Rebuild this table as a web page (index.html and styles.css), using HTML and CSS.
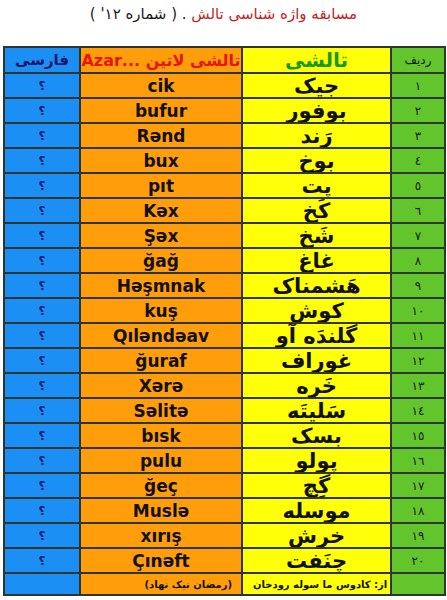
FILE: index.html
```html
<!DOCTYPE html>
<html lang="fa">
<head>
<meta charset="utf-8">
<link rel="stylesheet" href="styles.css">
</head>
<body>
<div class="page">
  <h1 class="title" dir="rtl"><span class="title-red">مسابقه واژه شناسی تالش</span> . ( شماره ۱۲' )</h1>
  <table class="quiz">
    <colgroup>
      <col class="c-fa"><col class="c-lat"><col class="c-tal"><col class="c-num">
    </colgroup>
    <thead>
      <tr>
        <th class="fa h-fa">فارسی</th>
        <th class="lat h-lat" dir="rtl">تالشی لاتین ...Azar</th>
        <th class="tal h-tal">تالشی</th>
        <th class="num h-num">ردیف</th>
      </tr>
    </thead>
    <tbody>
      <tr><td class="fa">؟</td><td class="lat">cik</td><td class="tal">جیک</td><td class="num">١</td></tr>
      <tr><td class="fa">؟</td><td class="lat">bufur</td><td class="tal">بوفور</td><td class="num">٢</td></tr>
      <tr><td class="fa">؟</td><td class="lat">Rənd</td><td class="tal">رَند</td><td class="num">٣</td></tr>
      <tr><td class="fa">؟</td><td class="lat">bux</td><td class="tal">بوخ</td><td class="num">٤</td></tr>
      <tr><td class="fa">؟</td><td class="lat">pıt</td><td class="tal">پِت</td><td class="num">٥</td></tr>
      <tr><td class="fa">؟</td><td class="lat">Kəx</td><td class="tal">کَخ</td><td class="num">٦</td></tr>
      <tr><td class="fa">؟</td><td class="lat">Şəx</td><td class="tal">شَخ</td><td class="num">٧</td></tr>
      <tr><td class="fa">؟</td><td class="lat">ğağ</td><td class="tal">غاغ</td><td class="num">٨</td></tr>
      <tr><td class="fa">؟</td><td class="lat">Həşmnak</td><td class="tal">هَشمناک</td><td class="num">٩</td></tr>
      <tr><td class="fa">؟</td><td class="lat">kuş</td><td class="tal">کوش</td><td class="num">١٠</td></tr>
      <tr><td class="fa">؟</td><td class="lat">Qıləndəav</td><td class="tal">گلندَه آو</td><td class="num">١١</td></tr>
      <tr><td class="fa">؟</td><td class="lat">ğuraf</td><td class="tal">غوراف</td><td class="num">١٢</td></tr>
      <tr><td class="fa">؟</td><td class="lat">Xərə</td><td class="tal">خَره</td><td class="num">١٣</td></tr>
      <tr><td class="fa">؟</td><td class="lat">Səlitə</td><td class="tal">سَلیتَه</td><td class="num">١٤</td></tr>
      <tr><td class="fa">؟</td><td class="lat">bısk</td><td class="tal">بسک</td><td class="num">١٥</td></tr>
      <tr><td class="fa">؟</td><td class="lat">pulu</td><td class="tal">پولو</td><td class="num">١٦</td></tr>
      <tr><td class="fa">؟</td><td class="lat">ğeç</td><td class="tal">گِچ</td><td class="num">١٧</td></tr>
      <tr><td class="fa">؟</td><td class="lat">Muslə</td><td class="tal">موسله</td><td class="num">١٨</td></tr>
      <tr><td class="fa">؟</td><td class="lat">xırış</td><td class="tal">خرش</td><td class="num">١٩</td></tr>
      <tr><td class="fa">؟</td><td class="lat">Çınəft</td><td class="tal">چنَفت</td><td class="num">٢٠</td></tr>
    </tbody>
    <tfoot>
      <tr>
        <td class="fa"></td>
        <td class="lat foot foot-r" dir="rtl">(رمضان نیک نهاد)</td>
        <td class="tal foot foot-l" dir="rtl">از: کادوس ما سوله رودخان</td>
        <td class="num"></td>
      </tr>
    </tfoot>
  </table>
</div>
</body>
</html>
```

FILE: styles.css
```css
html, body {
  margin: 0;
  padding: 0;
  background: #ffffff;
}

.page {
  width: 447px;
  font-family: "DejaVu Sans", "Liberation Sans", sans-serif;
  color: #111;
}

.title {
  margin: 0;
  padding-top: 4px;
  height: 46px;
  box-sizing: border-box;
  text-align: center;
  font-size: 15px;
  font-weight: normal;
  line-height: 20px;
  color: #1a1a1a;
}

.title-red {
  color: #c41e24;
}

.quiz {
  margin-left: 3px;
  border-collapse: separate;
  border-spacing: 2px;
  background: #2e342e;
  table-layout: fixed;
  width: 443px;
}

.c-fa { width: 74px; }
.c-lat { width: 160px; }
.c-tal { width: 147px; }
.c-num { width: 52px; }

.quiz th,
.quiz td {
  padding: 0;
  height: 23px;
  text-align: center;
  vertical-align: middle;
  overflow: hidden;
  white-space: nowrap;
}

.fa { background: #1c8ff5; }
.lat { background: #ff9e0a; }
.tal { background: #ffff0a; }
.num { background: #63c52c; }

.h-fa {
  color: #14166a;
  font-size: 15px;
  font-weight: bold;
}

.h-lat {
  color: #e8140c;
  font-size: 16px;
  font-weight: bold;
}

.h-tal {
  color: #169a1c;
  font-size: 20px;
  font-weight: bold;
}

.h-num {
  color: #1a1a1a;
  font-size: 12px;
  font-weight: normal;
}

tbody .fa {
  color: #14166a;
  font-size: 12px;
  font-weight: bold;
  line-height: 14px;
}

tbody .lat {
  font-size: 17px;
  font-weight: bold;
  color: #111;
  line-height: 20px;
}

tbody .tal {
  font-size: 21px;
  font-weight: bold;
  color: #111;
  line-height: 22px;
}

tbody .num {
  font-size: 12px;
  color: #1a1a1a;
  line-height: 14px;
}

.quiz tfoot td {
  height: 20px;
}

.foot {
  vertical-align: top;
  font-size: 10px;
  font-weight: bold;
  line-height: 13px;
  padding-top: 1px;
}

.quiz .foot-r {
  text-align: right;
  padding-right: 9px;
}

.quiz .foot-l {
  text-align: left;
  padding-left: 10px;
}
```
